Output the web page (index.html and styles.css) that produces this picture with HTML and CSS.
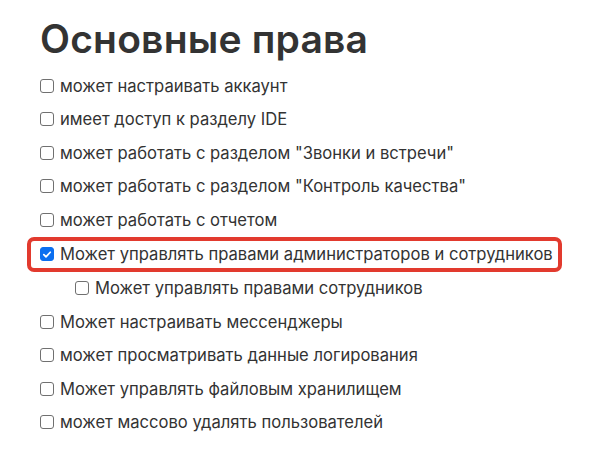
FILE: index.html
```html
<!DOCTYPE html>
<html lang="ru">
<head>
<meta charset="utf-8">
<link rel="stylesheet" href="styles.css">
</head>
<body>
<div class="page">
  <h1 class="title">Основные права</h1>
  <ul class="list">
    <li class="row"><span class="box"></span><span>может настраивать аккаунт</span></li>
    <li class="row"><span class="box"></span><span>имеет доступ к разделу IDE</span></li>
    <li class="row"><span class="box"></span><span>может работать с разделом "Звонки и встречи"</span></li>
    <li class="row"><span class="box"></span><span>может работать с разделом "Контроль качества"</span></li>
    <li class="row"><span class="box"></span><span>может работать с отчетом</span></li>
    <li class="row highlight"><span class="box checked"><svg viewBox="0 0 14 14" width="13" height="13"><path d="M3.3 7.2 L5.8 9.7 L10.8 4.4" fill="none" stroke="#fff" stroke-width="2" stroke-linecap="round" stroke-linejoin="round"/></svg></span><span>Может управлять правами администраторов и сотрудников</span></li>
    <li class="row sub"><span class="box"></span><span>Может управлять правами сотрудников</span></li>
    <li class="row"><span class="box"></span><span>Может настраивать мессенджеры</span></li>
    <li class="row"><span class="box"></span><span>может просматривать данные логирования</span></li>
    <li class="row"><span class="box"></span><span>Может управлять файловым хранилищем</span></li>
    <li class="row"><span class="box"></span><span>может массово удалять пользователей</span></li>
  </ul>
</div>
</body>
</html>
```
FILE: styles.css
```css
html, body { margin: 0; padding: 0; background: #fff; }
body { font-family: Inter, "Noto Sans", sans-serif; color: #333; }
.page { padding: 14px 0 0 40px; }
.title { margin: 0 0 5px 0; font-size: 39px; font-weight: 600; line-height: 50px; letter-spacing: 0.2px; color: #333; }
.list { list-style: none; margin: 0; padding: 0; }
.row { display: flex; align-items: center; gap: 6px; height: 33.5px; font-size: 16.6px; color: #333; white-space: nowrap; }
.box { box-sizing: border-box; width: 14px; height: 14px; border: 1.3px solid #707070; border-radius: 3px; flex: none; display: flex; align-items: center; justify-content: center; background: #fff; }
.box.checked { background: #0b6ff0; border-color: #0b6ff0; }
.highlight { box-sizing: border-box; margin-left: -13px; padding-left: 9px; width: 535px; border: 4px solid #e23a2e; border-radius: 7px; height: 35px; }
.sub { padding-left: 35px; }
```
